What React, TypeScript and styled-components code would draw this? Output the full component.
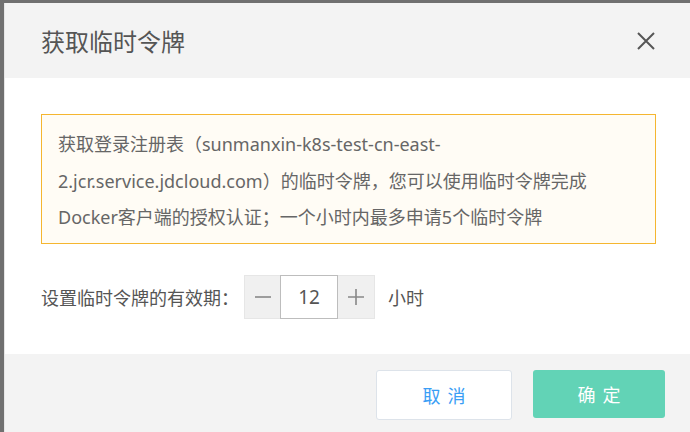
import React, { useState } from "react";
import styled, { createGlobalStyle } from "styled-components";

const GlobalStyle = createGlobalStyle`
  html, body {
    margin: 0;
    padding: 0;
    height: 100%;
    overflow: hidden;
    background-color: #707070;
  }
  body {
    font-family: "Noto Sans", "Noto Sans CJK SC", sans-serif;
  }
`;

const Dialog = styled.div`
  margin: 3px 0 0 4px;
  width: 688px;
  border-left: 1px solid #e6e6e6;
  background-color: #fff;
  box-sizing: border-box;
`;

const Header = styled.div`
  display: flex;
  justify-content: space-between;
  align-items: center;
  height: 75px;
  padding: 0 35px 0 36px;
  background-color: #f3f3f3;
`;

const Title = styled.h2`
  margin: 0;
  font-size: 24px;
  font-weight: 400;
  color: #555;
`;

const CloseButton = styled.button`
  display: flex;
  align-items: center;
  justify-content: center;
  width: 22px;
  height: 22px;
  padding: 0;
  border: none;
  background: none;
  cursor: pointer;
`;

const Body = styled.div`
  height: 276px;
  padding: 36px 36px 0 36px;
  box-sizing: border-box;
`;

const Notice = styled.div`
  padding: 11px 16px 7px 16px;
  border: 1px solid #f5b630;
  background-color: #fffcf5;
  font-size: 18px;
  line-height: 36.5px;
  color: #666;
`;

const Row = styled.div`
  display: flex;
  align-items: center;
  margin-top: 31px;
  font-size: 18px;
  color: #555;
`;

const Label = styled.span`
  width: 203px;
`;

const Stepper = styled.div`
  display: flex;
  height: 44px;
`;

const StepButton = styled.button<{ $side: "left" | "right" }>`
  display: flex;
  align-items: center;
  justify-content: center;
  width: ${(p) => (p.$side === "left" ? "36px" : "37px")};
  height: 44px;
  padding: 0;
  border: 1px solid #e6e6e6;
  border-${(p) => (p.$side === "left" ? "right" : "left")}: none;
  background-color: #f0f0f0;
  cursor: pointer;
`;

const ValueBox = styled.div`
  display: flex;
  align-items: center;
  justify-content: center;
  width: 58px;
  height: 44px;
  box-sizing: border-box;
  border: 1px solid #bdbdbd;
  background-color: #fff;
  font-size: 19px;
  color: #555;
`;

const Unit = styled.span`
  margin-left: 13px;
`;

const Footer = styled.div`
  display: flex;
  justify-content: flex-end;
  gap: 21px;
  height: 90px;
  padding: 16px 27px 0 0;
  box-sizing: border-box;
  background-color: #f3f3f3;
`;

const ActionButton = styled.button<{ $primary?: boolean }>`
  width: ${(p) => (p.$primary ? "132px" : "136px")};
  height: ${(p) => (p.$primary ? "48px" : "50px")};
  border-radius: 3px;
  border: ${(p) => (p.$primary ? "none" : "1px solid #dde3ea")};
  background-color: ${(p) => (p.$primary ? "#62d3b6" : "#fff")};
  color: ${(p) => (p.$primary ? "#fff" : "#3a9ef5")};
  font-family: "Noto Sans", "Noto Sans CJK SC", sans-serif;
  font-size: 18px;
  letter-spacing: 7px;
  text-indent: 7px;
  cursor: pointer;
`;

const App: React.FC = () => {
  const [hours, setHours] = useState(12);

  return (
    <>
      <GlobalStyle />
      <Dialog>
        <Header>
          <Title>获取临时令牌</Title>
          <CloseButton aria-label="close">
            <svg width="20" height="20" viewBox="0 0 20 20">
              <path d="M2 2 L18 18 M18 2 L2 18" stroke="#555" strokeWidth="2" />
            </svg>
          </CloseButton>
        </Header>
        <Body>
          <Notice>
            获取登录注册表（sunmanxin-k8s-test-cn-east-
            <br />
            2.jcr.service.jdcloud.com）的临时令牌，您可以使用临时令牌完成
            <br />
            Docker客户端的授权认证；一个小时内最多申请5个临时令牌
          </Notice>
          <Row>
            <Label>设置临时令牌的有效期：</Label>
            <Stepper>
              <StepButton $side="left" onClick={() => setHours(Math.max(1, hours - 1))}>
                <svg width="18" height="18" viewBox="0 0 18 18">
                  <path d="M1 9 H17" stroke="#888" strokeWidth="1.6" />
                </svg>
              </StepButton>
              <ValueBox>{hours}</ValueBox>
              <StepButton $side="right" onClick={() => setHours(hours + 1)}>
                <svg width="18" height="18" viewBox="0 0 18 18">
                  <path d="M1 9 H17 M9 1 V17" stroke="#888" strokeWidth="1.6" />
                </svg>
              </StepButton>
            </Stepper>
            <Unit>小时</Unit>
          </Row>
        </Body>
        <Footer>
          <ActionButton>取消</ActionButton>
          <ActionButton $primary>确定</ActionButton>
        </Footer>
      </Dialog>
    </>
  );
};

export default App;
